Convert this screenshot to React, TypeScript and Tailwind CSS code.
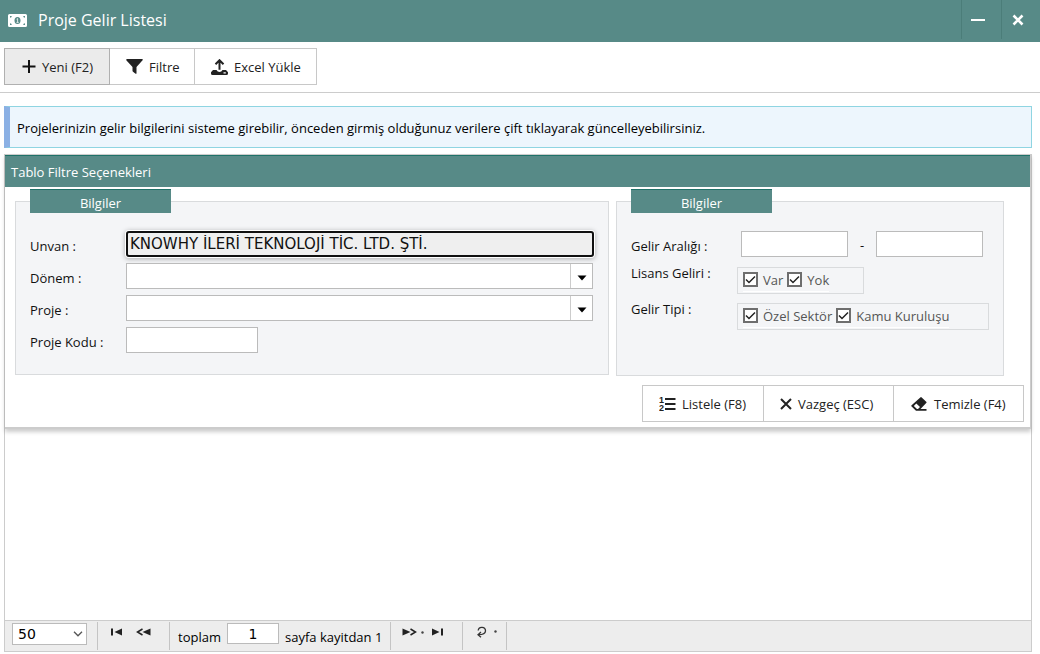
import type { ReactNode } from 'react';

const MoneyIcon = () => (
  <svg width="19" height="13" viewBox="0 0 19 13" aria-hidden="true">
    <path
      fill="#fff"
      d="M1.500 0h16A1.500 1.500 0 0 1 19 1.500v10a1.500 1.500 0 0 1-1.500 1.500h-16A1.500 1.500 0 0 1 0 11.500v-10A1.500 1.500 0 0 1 1.500 0Z"
    />
    <path fill="#578a87" d="M2 2h1.800A1.800 1.800 0 0 1 2 3.800ZM2 11V9.200A1.800 1.800 0 0 1 3.800 11ZM17 2v1.800A1.800 1.800 0 0 1 15.200 2ZM17 11h-1.800A1.800 1.800 0 0 1 17 9.200Z" />
    <ellipse cx="9.500" cy="6.500" rx="3" ry="3.500" fill="#578a87" />
    <path d="M8.600 5.200l1-.6v3.600M8.500 8.400h2.200" stroke="#fff" strokeWidth=".8" fill="none" />
  </svg>
);

const PlusIcon = () => (
  <svg width="14" height="14" viewBox="0 0 14 14" aria-hidden="true">
    <path d="M7 0v13M.5 6.500h13" stroke="#111" strokeWidth="2" fill="none" />
  </svg>
);

const FunnelIcon = () => (
  <svg width="17" height="15" viewBox="0 0 17 15" aria-hidden="true">
    <path fill="#222" d="M1 0h15q1 0 .8 1L10.500 8v6.200q0 1-.9.5L7 12.800q-.5-.3-.5-1V8L.3 1.200Q0 0 1 0Z" />
  </svg>
);

const UploadIcon = () => (
  <svg width="17" height="16" viewBox="0 0 17 16" aria-hidden="true">
    <path d="M8.500 1.500v9.300M4.500 5.200l4-4 4 4" stroke="#222" strokeWidth="2" fill="none" />
    <path fill="#222" d="M2 11h3.500q1 2 3 2t3-2H15l2 2.200V14.500Q17 16 15.500 16H1.500Q0 16 0 14.500V13.200ZM12.500 13.200v1.200h2.300v-1.200Z" fillRule="evenodd" />
  </svg>
);

const NumberedListIcon = () => (
  <svg width="17" height="16" viewBox="0 0 17 16" aria-hidden="true">
    <path d="M6 3h10.500M6 8h10.500M6 13h10.500" stroke="#222" strokeWidth="2" />
    <text x="0" y="7" fontSize="9" fontWeight="700" fontFamily="Liberation Sans, sans-serif" fill="#222">1</text>
    <text x="0" y="15" fontSize="9" fontWeight="700" fontFamily="Liberation Sans, sans-serif" fill="#222">2</text>
  </svg>
);

const CrossIcon = () => (
  <svg width="12" height="12" viewBox="0 0 12 12" aria-hidden="true">
    <path d="M1 1l10 10M11 1 1 11" stroke="#222" strokeWidth="2" fill="none" />
  </svg>
);

const EraserIcon = () => (
  <svg width="17" height="14" viewBox="0 0 17 14" aria-hidden="true">
    <path
      fill="#222"
      fillRule="evenodd"
      d="M9.300.4q.7-.6 1.400 0l4.500 4.300q.7.700 0 1.400L9.500 12H15.500v1.800H5L.6 9.600q-.7-.7 0-1.400ZM2.800 8.900l3.200 3h1l2-2-3.700-3.500Z"
    />
  </svg>
);

const FirstIcon = () => (
  <svg width="13" height="8" viewBox="0 0 13 8" aria-hidden="true">
    <path fill="#222" d="M1 .5h2v7H1ZM12 .5v7L4.500 4Z" />
  </svg>
);

const PrevIcon = () => (
  <svg width="15" height="8" viewBox="0 0 15 8" aria-hidden="true">
    <path d="M6.500 1 1.500 4l5 3" stroke="#222" strokeWidth="1.500" fill="none" />
    <path fill="#222" d="M14.500.5v7L6.500 4Z" />
  </svg>
);

const NextIcon = () => (
  <svg width="15" height="8" viewBox="0 0 15 8" aria-hidden="true">
    <path d="m8.500 1 5 3-5 3" stroke="#222" strokeWidth="1.500" fill="none" />
    <path fill="#222" d="M.5.5v7l8-3.500Z" />
  </svg>
);

const LastIcon = () => (
  <svg width="13" height="8" viewBox="0 0 13 8" aria-hidden="true">
    <path fill="#222" d="M10 .5h2v7h-2ZM1 .5v7L8.500 4Z" />
  </svg>
);

const RefreshIcon = () => (
  <svg width="11" height="12" viewBox="0 0 11 12" aria-hidden="true">
    <path d="M2.200 4.500C2.500 0 9.800.3 9.500 5 9.300 8 6.500 8.700 2.500 8.700M5 6 2 8.700 5 11.300" stroke="#333" strokeWidth="1.300" fill="none" />
  </svg>
);

const DotIcon = () => (
  <svg width="3" height="3" viewBox="0 0 3 3" aria-hidden="true">
    <circle cx="1.500" cy="1.500" r="1.200" fill="#444" />
  </svg>
);

function ToolButton({ icon, children, className = '' }: { icon: ReactNode; children: ReactNode; className?: string }) {
  return (
    <button type="button" className={`flex h-[37px] items-center gap-1.5 border whitespace-nowrap text-[#222] ${className}`}>
      {icon}
      <span>{children}</span>
    </button>
  );
}

function Combo({ id }: { id: string }) {
  return (
    <div className="mr-px flex h-[26px] border border-[#bbb] bg-white">
      <input id={id} type="text" className="h-full min-w-0 flex-1 px-1 outline-none" />
      <button type="button" aria-label="Aç" className="flex w-[22px] items-center justify-center border-l border-[#ccc] pt-1">
        <svg width="10" height="6" viewBox="0 0 10 6" aria-hidden="true">
          <path fill="#000" d="M.5.500h9L5 5.500Z" />
        </svg>
      </button>
    </div>
  );
}

function Tick({ children }: { children: ReactNode }) {
  return (
    <label className="flex items-center gap-[5px]">
      <span className="grid">
        <input
          type="checkbox"
          defaultChecked
          className="peer col-start-1 row-start-1 size-[15px] appearance-none border-2 border-[#6e6e6e] bg-white"
        />
        <svg className="pointer-events-none invisible col-start-1 row-start-1 peer-checked:visible" width="15" height="15" viewBox="0 0 15 15" aria-hidden="true">
          <path d="m3 7.500 3 3 6-6" stroke="#222" strokeWidth="1.500" fill="none" />
        </svg>
      </span>
      {children}
    </label>
  );
}

const legend = 'mr-auto ml-0 h-6 w-[141px] border-t border-[#1f7168] bg-[#578a87] pt-[3px] text-center leading-5 text-white';
const fieldset = 'min-w-0 border border-[#d9dbdd] bg-[#f4f5f7] px-[14px]';
const field = 'h-[26px] border border-[#bbb] bg-white px-1 outline-none';
const group = 'flex h-[27px] items-start border border-[#d9dbdd] pl-[5px] text-[#555]';

export default function App() {
  return (
    <div className="flex min-h-screen flex-col bg-white pb-[2px] font-['Open_Sans','Noto_Sans',sans-serif] text-[13px] leading-5 text-[#111]">
      <header className="flex h-[42px] items-start bg-[#578a87] text-white">
        <div className="flex h-10 flex-1 items-center gap-[11px] pl-2">
          <MoneyIcon />
          <h1 className="text-[16px]">Proje Gelir Listesi</h1>
        </div>
        <button type="button" aria-label="Küçült" className="flex h-[39px] w-10 items-center justify-center border-l border-[#4b7d79] pr-2">
          <svg width="14" height="2" aria-hidden="true"><path d="M0 1h14" stroke="#fff" strokeWidth="2" /></svg>
        </button>
        <button type="button" aria-label="Kapat" className="flex h-[39px] w-[39px] items-center justify-center border-l border-[#4b7d79] pr-1.5">
          <svg width="12" height="12" viewBox="0 0 12 12" aria-hidden="true">
            <path d="m1.500 1.500 9 9M10.500 1.500l-9 9" stroke="#fff" strokeWidth="2.600" />
          </svg>
        </button>
      </header>

      <div className="flex border-b border-[#ccc] px-1 pt-1.5 pb-[7px]">
        <ToolButton icon={<PlusIcon />} className="w-[106px] border-[#b0b0b0] bg-[#ebebeb] pl-[17px]">Yeni (F2)</ToolButton>
        <ToolButton icon={<FunnelIcon />} className="w-[85px] border-l-0 border-[#c8c8c8] pl-4">Filtre</ToolButton>
        <ToolButton icon={<UploadIcon />} className="w-[122px] border-l-0 border-[#c8c8c8] pl-4">Excel Yükle</ToolButton>
      </div>

      <p className="mx-1 mt-[13px] mr-2 flex h-[42px] items-center border border-l-6 border-[#8fd5e2] border-l-[#8bb0e4] bg-[#edf6fd] pt-px pl-[7px] text-black">
        Projelerinizin gelir bilgilerini sisteme girebilir, önceden girmiş olduğunuz verilere çift tıklayarak güncelleyebilirsiniz.
      </p>

      <main className="mt-1.5 mr-2 ml-1 flex flex-1 flex-col border-r border-l border-[#ccc]">
        <section className="border-t border-r border-b-2 border-[#ccc] shadow-[0_3px_4px_rgba(0,0,0,0.2)]">
          <h2 className="h-8 border-t border-[#1f7168] bg-[#578a87] pt-1.5 pl-[6px] text-white">Tablo Filtre Seçenekleri</h2>
          <div className="grid grid-cols-[594fr_388fr] items-start gap-[7px] pt-[2px] pr-[26px] pl-[10px]">
            <fieldset className={`${fieldset} h-[186px]`}>
              <legend className={legend}>Bilgiler</legend>
              <div className="grid grid-cols-[96px_1fr] items-start gap-y-1.5 pt-[18px]">
                <label htmlFor="unvan" className="pt-[5px]">Unvan :</label>
                <input
                  id="unvan"
                  type="text"
                  readOnly
                  defaultValue="KNOWHY İLERİ TEKNOLOJİ TİC. LTD. ŞTİ."
                  className="h-[26px] w-full rounded-[3px] border-2 border-[#101010] bg-[#efefef] px-[2px] font-['DejaVu_Sans',sans-serif] text-[15px] shadow-[0_0_0_1px_#fff,0_1px_5px_1px_rgba(0,0,0,0.3)] outline-none"
                />
                <label htmlFor="donem" className="pt-[5px]">Dönem :</label>
                <Combo id="donem" />
                <label htmlFor="proje" className="pt-[5px]">Proje :</label>
                <Combo id="proje" />
                <label htmlFor="kod" className="pt-[5px]">Proje Kodu :</label>
                <input id="kod" type="text" className={`${field} w-[132px]`} />
              </div>
            </fieldset>
            <fieldset className={`${fieldset} h-[187px]`}>
              <legend className={legend}>Bilgiler</legend>
              <div className="grid grid-cols-[106px_1fr] items-start pt-[18px]">
                <label htmlFor="min" className="pt-[5px]">Gelir Aralığı :</label>
                <div className="flex h-9 items-start pl-1">
                  <input id="min" type="text" className={`${field} w-[107px]`} />
                  <span className="w-7 pt-1 text-center">-</span>
                  <input type="text" aria-label="Gelir Aralığı üst sınır" className={`${field} w-[107px]`} />
                </div>
                <span className="-mt-1">Lisans Geliri :</span>
                <div className="h-9">
                  <div className={`${group} w-[127px]`}>
                    <div className="flex h-6 items-center gap-1 border-b border-white">
                      <Tick>Var</Tick>
                      <Tick>Yok</Tick>
                    </div>
                  </div>
                </div>
                <span className="-mt-1">Gelir Tipi :</span>
                <div className={`${group} w-[252px]`}>
                  <div className="flex h-6 items-center gap-1 border-b border-white">
                    <Tick>Özel Sektör</Tick>
                    <Tick>Kamu Kuruluşu</Tick>
                  </div>
                </div>
              </div>
            </fieldset>
          </div>
          <div className="flex justify-end pt-[9px] pr-1.5 pb-[5px]">
            <ToolButton icon={<NumberedListIcon />} className="w-[122px] border-[#c8c8c8] pl-4">Listele (F8)</ToolButton>
            <ToolButton icon={<CrossIcon />} className="w-[130px] border-l-0 border-[#c8c8c8] pl-4">Vazgeç (ESC)</ToolButton>
            <ToolButton icon={<EraserIcon />} className="w-[130px] border-l-0 border-[#c8c8c8] pl-[17px]">Temizle (F4)</ToolButton>
          </div>
        </section>

        <div className="flex-1" />

        <footer className="flex h-8 items-start border-t border-b border-[#ccc] bg-[#ededed] text-black">
          <div className="mt-[2px] ml-[7px] grid w-[75px] items-center">
            <select aria-label="Sayfa boyutu" className="col-start-1 row-start-1 h-[22px] appearance-none border border-[#bbb] bg-white pl-[5px] font-['DejaVu_Sans',sans-serif] text-[14px]">
              <option>50</option>
            </select>
            <svg className="pointer-events-none col-start-1 row-start-1 mr-1 justify-self-end" width="10" height="6" viewBox="0 0 10 6" aria-hidden="true">
              <path d="m1 .8 4 4 4-4" stroke="#555" strokeWidth="1.300" fill="none" />
            </svg>
          </div>
          <div className="mt-px ml-[10px] flex h-7 w-[72px] items-start gap-[13px] border-l border-[#c4c4c4] pt-1.5 pl-3">
            <button type="button" aria-label="İlk sayfa"><FirstIcon /></button>
            <button type="button" aria-label="Önceki sayfa"><PrevIcon /></button>
          </div>
          <div className="mt-px flex h-7 w-[221px] items-start border-l border-[#c4c4c4] pl-2 whitespace-nowrap">
            <label htmlFor="page" className="w-[49px] pt-[5px]">toplam</label>
            <input id="page" type="text" defaultValue="1" className="mt-px h-[21px] w-[52px] border border-[#bbb] bg-white text-center font-['DejaVu_Sans',sans-serif] text-[14px] outline-none" />
            <span className="pt-[5px] pl-1.5">sayfa kayitdan 1</span>
          </div>
          <div className="mt-px flex h-7 w-[72px] items-start border-l border-[#c4c4c4] pt-1.5 pl-[11px]">
            <button type="button" aria-label="Sonraki sayfa"><NextIcon /></button>
            <span className="mt-[3px] ml-1"><DotIcon /></span>
            <button type="button" aria-label="Son sayfa" className="ml-[7px]"><LastIcon /></button>
          </div>
          <div className="mt-px flex h-7 w-[44px] items-start border-l border-[#c4c4c4] pt-1 pl-[13px]">
            <button type="button" aria-label="Yenile"><RefreshIcon /></button>
            <span className="mt-1 ml-[7px]"><DotIcon /></span>
          </div>
          <div className="mt-px h-7 border-l border-[#c4c4c4]" />
        </footer>
      </main>
    </div>
  );
}
